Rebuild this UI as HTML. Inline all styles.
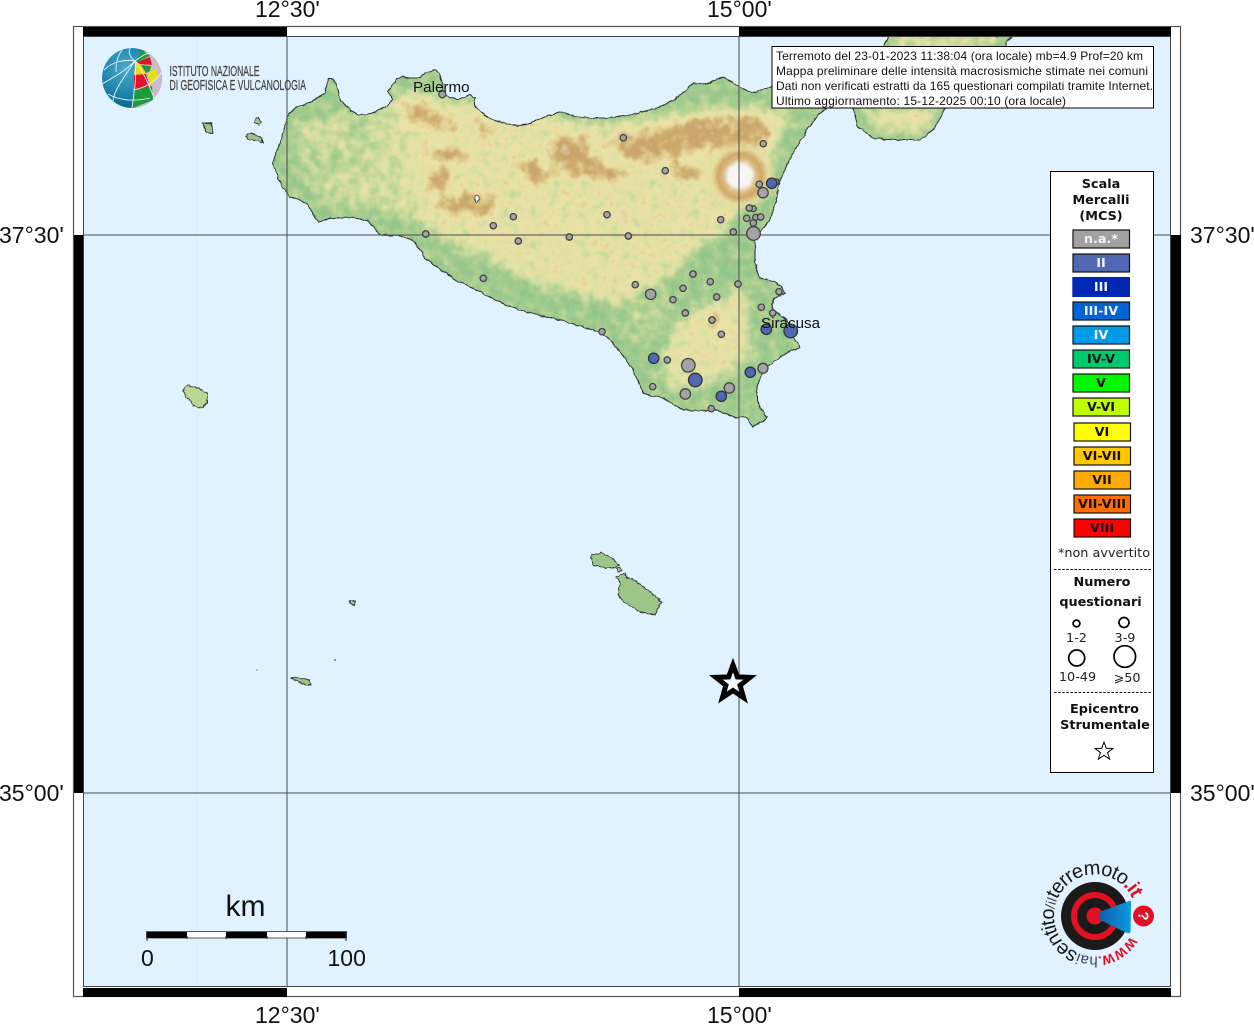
<!DOCTYPE html>
<html><head><meta charset="utf-8"><title>Mappa intensità</title>
<style>
html,body{margin:0;padding:0;background:#fff;width:1254px;height:1024px;overflow:hidden}
svg{display:block}
.ax{font-family:"Liberation Sans",sans-serif;font-size:23px;fill:#111}
.info{font-family:"Liberation Sans",sans-serif;font-size:12px;fill:#111}
.b{font-family:"DejaVu Sans",sans-serif;font-weight:bold;font-size:12.8px;fill:#111;text-anchor:middle}
.r{font-family:"DejaVu Sans",sans-serif;font-size:12.8px;fill:#222;text-anchor:middle}
.w{fill:#f2f2f2}
.sw{stroke:#111;stroke-width:1.2}
.g circle{fill:#a3a3a5;stroke:#444;stroke-width:1.3}
.u circle{fill:#4f68b2;stroke:#333;stroke-width:1.3}
.isl{fill:#9cc688;stroke:#3a3f3a;stroke-width:1}
</style></head><body>
<svg width="1254" height="1024" viewBox="0 0 1254 1024" xmlns="http://www.w3.org/2000/svg">
<defs>
<path id="coast" d="M287 117L291 112 297 107 307 104 314 100 320 96 325 93 327 84 328 79 333 79 336 84 338 92 341 100 345 105 350 110 357 114 364 115 372 113 380 109 390 104 392 100 388 91 393 85 396 79 403 77 410 78 420 78 424 74 431 71 436 70 440 75 442 82 443 88 442 93 450 97 457 99 465 98 470 95 475 98 475 105 481 112 487 117 496 121 505 123 517 126 527 124 537 120 547 116 557 113 563 112 570 115 577 117 590 118 607 118 620 116 630 115 645 111 657 108 668 103 677 98 686 90 693 83 702 84 710 83 717 79 723 77 730 81 737 85 745 90 753 93 762 90 770 87 785 78 800 78 827 108 820 113 813 122 807 130 800 142 793 153 788 163 784 172 780 180 778 189 777 197 774 208 770 220 763 229 755 237 755 250 755 263 757 271 760 278 768 280 777 283 782 288 785 293 779 296 773 300 772 305 773 310 780 315 787 320 790 328 793 337 797 342 800 347 793 350 787 353 776 360 767 367 761 376 757 387 757 400 761 409 767 418 760 423 753 427 749 422 747 417 737 418 727 414 717 410 700 411 683 410 673 404 663 398 653 396 643 393 638 381 633 370 623 356 613 343 600 332 580 326 560 320 530 313 505 305 480 292 456 280 441 270 427 260 420 250 413 240 400 236 380 235 373 227 367 220 347 217 330 219 318 222 312 212 307 203 298 199 290 197 282 187 277 175 273 163 276 153 280 143 284 130Z"/>
<path id="cal" d="M889 36L884 46 853 108 858 127 873 138 895 140 920 140 935 128 945 108 1005 46 1012 36Z"/>
<clipPath id="cc"><use href="#coast"/><use href="#cal"/></clipPath>
<filter id="terrain" filterUnits="userSpaceOnUse" x="260" y="30" width="780" height="420" color-interpolation-filters="sRGB">
<feGaussianBlur in="SourceGraphic" stdDeviation="5" result="e"/>
<feTurbulence type="fractalNoise" baseFrequency=".1" numOctaves="3" seed="3" result="n"/>
<feColorMatrix in="n" values="1 0 0 0 0 1 0 0 0 0 1 0 0 0 0 0 0 0 0 1" result="ng"/>
<feComposite in="e" in2="ng" operator="arithmetic" k1="0" k2="1" k3=".4" k4="-.2"/>
<feComponentTransfer>
<feFuncR type="table" tableValues=".565 .588 .659 .761 .875 .922 .878 .812 .784 .863 .94"/>
<feFuncG type="table" tableValues=".769 .78 .808 .847 .878 .89 .808 .682 .643 .769 .91"/>
<feFuncB type="table" tableValues=".541 .549 .565 .604 .643 .659 .565 .439 .408 .627 .85"/>
<feFuncA type="linear" slope="0" intercept="1"/>
</feComponentTransfer>
<feGaussianBlur stdDeviation=".6"/>
</filter>
<filter id="coastr" filterUnits="userSpaceOnUse" x="260" y="30" width="780" height="420" color-interpolation-filters="sRGB">
<feTurbulence type="fractalNoise" baseFrequency=".18" numOctaves="2" seed="7"/>
<feDisplacementMap in="SourceGraphic" scale="3" xChannelSelector="R" yChannelSelector="G"/>
</filter>
<filter id="islr" filterUnits="userSpaceOnUse" x="170" y="100" width="520" height="600" color-interpolation-filters="sRGB">
<feTurbulence type="fractalNoise" baseFrequency=".3" numOctaves="2" seed="5"/>
<feDisplacementMap in="SourceGraphic" scale="3" xChannelSelector="R" yChannelSelector="G"/>
</filter>
<radialGradient id="etna"><stop offset="0" stop-color="#fbf9fb"/><stop offset=".3" stop-color="#f6f2f0"/><stop offset=".44" stop-color="#dcbc84"/><stop offset=".58" stop-color="#cfa866"/><stop offset=".74" stop-color="#e7dca0" stop-opacity=".85"/><stop offset="1" stop-color="#e7dca0" stop-opacity="0"/></radialGradient>
<radialGradient id="globe" cx=".4" cy=".35" r=".75"><stop offset="0" stop-color="#4aaccb"/><stop offset=".6" stop-color="#1a82a8"/><stop offset="1" stop-color="#0b5278"/></radialGradient>
<linearGradient id="mega" x1="0" y1="0" x2="1" y2="0"><stop offset="0" stop-color="#0d5fae"/><stop offset="1" stop-color="#0b9be0"/></linearGradient>
<clipPath id="gc"><circle cx="132" cy="78" r="30"/></clipPath>
<path id="arc" d="M1130.4 936.2A41 41 0 1 1 1135.4 908.9"/>
</defs>

<!-- sea -->
<rect x="83" y="36" width="1088" height="951" fill="#e0f2ff"/>
<line x1="197" y1="36" x2="197" y2="987" stroke="#d9ecf8" stroke-width="1"/>

<!-- land -->
<g filter="url(#coastr)">
<g clip-path="url(#cc)">
<g filter="url(#terrain)">
<rect x="260" y="30" width="780" height="420" fill="#2a2a2a"/>
<!-- elevation blobs -->
<path d="M292 125L395 100 400 205 340 212 300 180Z" fill="#444"/>
<path d="M300 125L350 118 345 150 300 150Z" fill="#5c5c5c"/>
<path d="M325 175L395 160 385 200 320 200Z" fill="#585858"/>
<path d="M365 110L410 95 430 225 385 215 365 170Z" fill="#585858"/>
<path d="M395 88L480 105 600 125 720 108 790 110 770 170 720 235 700 245 670 275 620 305 540 285 470 250 425 228 405 170Z" fill="#727272"/>
<path d="M680 320L745 285 750 360 705 385 665 390 665 350Z" fill="#727272"/>
<path d="M700 240L752 240 752 280 700 282Z" fill="#262626"/>
<path d="M625 300L680 290 660 340 628 345Z" fill="#3c3c3c"/>
<path d="M860 110L940 110 925 132 880 132Z" fill="#727272"/>
<path d="M892 36L1005 36 990 46 890 46Z" fill="#727272"/>
<!-- ridges -->
<g fill="#b8b8b8">
<path d="M405 108L428 102 434 118 410 124Z"/>
<path d="M425 112L452 116 454 132 430 130Z"/>
<path d="M476 120L488 116 492 136 480 138Z"/>
<path d="M432 148L464 148 466 162 436 162Z"/>
<path d="M430 170L450 168 446 192 422 192Z"/>
<path d="M438 198L492 193 494 214 442 214Z"/>
<path d="M518 163L534 158 554 175 540 185 522 178Z"/>
<path d="M552 136L587 138 594 167 570 177 550 160Z"/>
<path d="M588 153L622 170 612 186 583 172Z"/>
<path d="M610 138L660 128 700 116 762 116 772 137 745 154 700 147 680 157 645 162 618 154Z"/>
<path d="M668 170L697 163 702 177 673 182Z"/>
<path d="M706 316L718 314 718 328 706 328Z"/>
</g>
<g fill="#f4f4f4"><ellipse cx="565" cy="150" rx="6" ry="6"/><ellipse cx="696" cy="130" rx="7" ry="4"/></g>
</g>
<circle cx="740" cy="176" r="38" fill="url(#etna)"/>
<ellipse cx="477" cy="199" rx="1.6" ry="3.4" fill="#f4fbff" stroke="#333" stroke-width=".7"/>
</g>
<use href="#coast" fill="none" stroke="#343a36" stroke-width="1.1"/>
<use href="#cal" fill="none" stroke="#343a36" stroke-width="1.1"/>
</g>

<!-- islands -->
<g class="isl" filter="url(#islr)">
<path d="M202 123L212 123 213 133 207 133Z"/>
<path d="M246 135L252 133 262 138 263 143 255 140 248 140Z"/>
<path d="M255 118L258 117 261 122 259 125 255 123Z"/>
<path d="M183 390L188 385 193 387 198 388 207 393 207 403 202 408 193 406 190 400 185 396Z" fill="#bcd694"/>
<path d="M291 678L295 677 310 680 311 685 305 685Z"/>
<path d="M591 555L602 553 612 558 619 565 615 568 605 568 593 565Z"/>
<path d="M617 568L620 567 622 571 618 572Z"/>
<path d="M616 577L625 573 627 578 632 579 637 582 650 592 662 602 658 608 655 615 640 612 625 603 618 595 620 582Z"/>
<path d="M350 601L355 601 355 605 350 604Z"/>
</g>
<circle cx="335" cy="660" r=".9" fill="#555"/><circle cx="257" cy="670" r=".7" fill="#777"/>

<!-- grid -->
<g stroke="#4c4c4c" stroke-width="1">
<line x1="287" y1="36" x2="287" y2="987"/><line x1="739" y1="36" x2="739" y2="987"/>
<line x1="83" y1="235" x2="1171" y2="235"/><line x1="83" y1="793" x2="1171" y2="793"/>
</g>

<!-- frame -->
<rect x="73.5" y="26.5" width="1107" height="970" fill="none" stroke="#555" stroke-width="1.2"/>
<rect x="83.5" y="36.5" width="1087" height="950" fill="none" stroke="#444" stroke-width="1"/>
<g fill="#000">
<rect x="83" y="27" width="204" height="9"/><rect x="739" y="27" width="432" height="9"/>
<rect x="83" y="988" width="204" height="9"/><rect x="739" y="988" width="432" height="9"/>
<rect x="74" y="235" width="9" height="558"/><rect x="1171" y="235" width="10" height="558"/>
</g>
<g class="ax">
<text x="255" y="17">12°30'</text><text x="707" y="17">15°00'</text>
<text x="255" y="1023">12°30'</text><text x="707" y="1023">15°00'</text>
<text x="-1" y="243">37°30'</text><text x="-1" y="801">35°00'</text>
<text x="1190" y="243">37°30'</text><text x="1190" y="801">35°00'</text>
</g>

<!-- stations -->
<g class="g">
<circle cx="442.3" cy="94.3" r="3.5"/><circle cx="513.3" cy="216.7" r="3.2"/><circle cx="493.3" cy="225.7" r="3.2"/><circle cx="425.7" cy="234" r="3.2"/><circle cx="518.3" cy="241" r="3.2"/><circle cx="483.3" cy="278.3" r="3.2"/>
<circle cx="623.3" cy="137.7" r="3.2"/><circle cx="665.3" cy="170.7" r="3.2"/><circle cx="763.3" cy="143.7" r="3.2"/><circle cx="759.3" cy="184.3" r="3.2"/><circle cx="776" cy="182" r="3"/><circle cx="763" cy="192.7" r="5.2"/>
<circle cx="753.3" cy="208.7" r="3"/><circle cx="749.3" cy="208" r="3.2"/><circle cx="720.7" cy="219.7" r="3.2"/><circle cx="746.7" cy="218.3" r="3.2"/><circle cx="755.7" cy="217.3" r="3"/><circle cx="760.7" cy="217" r="3.2"/><circle cx="753.3" cy="223" r="3.2"/><circle cx="607" cy="214.7" r="3.2"/><circle cx="733.3" cy="232" r="3.2"/><circle cx="569.3" cy="237" r="3.2"/><circle cx="628.3" cy="236" r="3.2"/><circle cx="753.5" cy="233.5" r="6.8"/>
<circle cx="693" cy="274" r="3.2"/><circle cx="710.3" cy="281.7" r="3.2"/><circle cx="635.3" cy="284.7" r="3.2"/><circle cx="738" cy="284" r="3.2"/><circle cx="683" cy="288.3" r="3.2"/><circle cx="650.7" cy="294.3" r="5.2"/><circle cx="716.7" cy="297" r="3.2"/><circle cx="673" cy="299.7" r="3.2"/><circle cx="779" cy="291.7" r="3.2"/><circle cx="761.3" cy="307.3" r="3.2"/><circle cx="772.7" cy="313" r="3.2"/><circle cx="685.3" cy="313" r="3.2"/><circle cx="712" cy="320" r="3.2"/><circle cx="721.3" cy="334.3" r="3.2"/><circle cx="602" cy="331.7" r="3.2"/><circle cx="667.3" cy="360" r="3.2"/><circle cx="688.3" cy="365.3" r="6.8"/><circle cx="763" cy="368.3" r="5"/><circle cx="729.3" cy="388" r="5.2"/><circle cx="652.7" cy="386.7" r="3.2"/><circle cx="685.3" cy="394" r="5.2"/><circle cx="711.3" cy="408.7" r="3.2"/>
</g>
<g class="u">
<circle cx="771.7" cy="183.3" r="5.2"/><circle cx="766.3" cy="329.3" r="5.2"/><circle cx="790.7" cy="331" r="6.8"/><circle cx="653.7" cy="358.3" r="5.2"/><circle cx="750.3" cy="372.3" r="5.2"/><circle cx="695.3" cy="380" r="6.8"/><circle cx="721.3" cy="396.3" r="5.2"/>
</g>
<g font-family="'Liberation Sans',sans-serif" font-size="15.2" fill="#111">
<text x="413" y="92">Palermo</text><text x="761" y="328">Siracusa</text>
</g>

<!-- epicentre star -->
<path d="M733 665L737.4 676.9 750.1 677.4 740.1 685.3 743.6 697.6 733 690.5 722.4 697.6 725.9 685.3 715.9 677.4 728.6 676.9Z" fill="#f1f8fd" stroke="#000" stroke-width="5" stroke-miterlimit="8"/>

<!-- info box -->
<rect x="772" y="46.5" width="381.5" height="61.5" fill="#fff" stroke="#000" stroke-width="1"/>
<g class="info">
<text x="776" y="60" textLength="367">Terremoto del 23-01-2023 11:38:04 (ora locale) mb=4.9 Prof=20 km</text>
<text x="776" y="75" textLength="372">Mappa preliminare delle intensità macrosismiche stimate nei comuni</text>
<text x="776" y="90" textLength="377">Dati non verificati estratti da 165 questionari compilati tramite Internet.</text>
<text x="776" y="105" textLength="290">Ultimo aggiornamento: 15-12-2025 00:10 (ora locale)</text>
</g>

<!-- INGV logo -->
<g clip-path="url(#gc)">
<circle cx="132" cy="78" r="30" fill="url(#globe)"/>
<path d="M136 61L146 50 165 60 165 110 133 110 134 90 134 72Z" fill="#c9bcca"/>
<path d="M136 61L142 50 150 56 137 62Z" fill="#1d9a3a"/>
<path d="M137 62L150 57 152 65 140 64Z" fill="#e3132c"/>
<path d="M135 63L142 65 146 75 135 75Z" fill="#e8df10"/>
<path d="M141 65L151 66 150 71 146 73Z" fill="#1d9a3a"/>
<path d="M134 75L146 74 150 88 134 90Z" fill="#e3132c"/>
<path d="M147 74L156 68 158 78 151 85Z" fill="#e8df10"/>
<path d="M133 90L152 86 153 100 133 108Z" fill="#1d9a3a"/>
<g fill="none" stroke="#e8f4f8" stroke-width=".9">
<path d="M135 61C137 78 134 92 132 108"/>
<path d="M135 61C124 59 112 62 104 70"/>
<path d="M135 61C124 72 112 78 102 84"/>
<path d="M135 61C122 80 113 92 113 102"/>
<path d="M122 50C116 58 116 66 116 72"/>
<path d="M135 61C130 58 128 52 130 48"/>
<path d="M135 61C143 55 148 52 152 54"/>
<path d="M135 61C144 72 150 88 155 100"/>
<path d="M133 90C145 88 155 82 162 72"/>
<path d="M108 94C118 100 134 102 150 98"/>
</g>
</g>
<g font-family="'Liberation Sans Narrow','Liberation Sans',sans-serif" font-size="14.5" fill="#444" stroke="#444" stroke-width=".25">
<text x="169.5" y="76" textLength="90" lengthAdjust="spacingAndGlyphs">ISTITUTO NAZIONALE</text>
<text x="169.5" y="90" textLength="136.5" lengthAdjust="spacingAndGlyphs">DI GEOFISICA E VULCANOLOGIA</text>
</g>

<!-- legend -->
<rect x="1050.5" y="171.5" width="103" height="601" fill="#fff" stroke="#000" stroke-width="1"/>
<text class="b" x="1101" y="188">Scala</text><text class="b" x="1101" y="204">Mercalli</text><text class="b" x="1101" y="220">(MCS)</text>
<g class="sw">
<rect x="1073" y="230" width="56.5" height="18" fill="#a1a1a1"/>
<rect x="1073" y="254" width="56.5" height="18" fill="#5068b0"/>
<rect x="1072.3" y="277" width="57.7" height="20" fill="#0028b4" stroke="none"/>
<rect x="1073" y="302" width="56.5" height="18" fill="#0064d2"/>
<rect x="1073" y="326" width="56.5" height="18" fill="#009be6"/>
<rect x="1073" y="350" width="56.5" height="18" fill="#00c86e"/>
<rect x="1073" y="374" width="56.5" height="18" fill="#00f800"/>
<rect x="1073" y="398" width="56.5" height="18" fill="#bfff00"/>
<rect x="1074" y="423" width="56.5" height="18" fill="#ffff00"/>
<rect x="1074" y="447" width="56.5" height="18" fill="#ffc800"/>
<rect x="1074" y="471" width="56.5" height="18" fill="#ffaa00"/>
<rect x="1074" y="495" width="56.5" height="18" fill="#ff6e00"/>
<rect x="1074" y="519" width="56.5" height="18" fill="#ff0000"/>
</g>
<text class="b w" x="1101" y="243">n.a.*</text><text class="b w" x="1101" y="267">II</text><text class="b w" x="1101" y="291">III</text><text class="b w" x="1101" y="315">III-IV</text><text class="b w" x="1101" y="339">IV</text>
<text class="b" x="1101" y="363">IV-V</text><text class="b" x="1101" y="387">V</text><text class="b" x="1101" y="411">V-VI</text><text class="b" x="1102" y="436">VI</text><text class="b" x="1102" y="460">VI-VII</text><text class="b" x="1102" y="484">VII</text><text class="b" x="1102" y="508">VII-VIII</text><text class="b" x="1102" y="532">VIII</text>
<text class="r" x="1104" y="557">*non avvertito</text>
<line x1="1054" y1="569.5" x2="1152" y2="569.5" stroke="#111" stroke-width="1" stroke-dasharray="2.5 1.6"/>
<text class="b" x="1102" y="586">Numero</text><text class="b" x="1100.5" y="606">questionari</text>
<g fill="none" stroke="#000" stroke-width="1.7">
<circle cx="1076.5" cy="623.5" r="3.4"/><circle cx="1124" cy="622.5" r="5"/><circle cx="1076.7" cy="658" r="8"/><circle cx="1124.8" cy="656.5" r="10.8"/>
</g>
<text class="r" x="1076.5" y="642">1-2</text><text class="r" x="1125" y="642">3-9</text><text class="r" x="1077.5" y="681">10-49</text><text class="r" x="1127" y="682">⩾50</text>
<line x1="1054" y1="692.5" x2="1151" y2="692.5" stroke="#111" stroke-width="1" stroke-dasharray="2.5 1.6"/>
<text class="b" x="1104.5" y="713">Epicentro</text><text class="b" x="1105" y="729">Strumentale</text>
<path d="M1104 742L1106.2 748.3 1113 748.5 1107.6 752.6 1109.6 759 1104 755.3 1098.4 759 1100.4 752.6 1095 748.5 1101.8 748.3Z" fill="#fff" stroke="#000" stroke-width="1"/>

<!-- scale -->
<g font-family="'Liberation Sans',sans-serif" fill="#111">
<text x="225.5" y="916" font-size="30">km</text>
<text x="141" y="966" font-size="23">0</text><text x="327.5" y="966" font-size="23">100</text>
</g>
<rect x="146.5" y="931.5" width="200" height="6.5" fill="#fff" stroke="#333" stroke-width=".8"/>
<g fill="#000"><rect x="147" y="932" width="40" height="6"/><rect x="226" y="932" width="41" height="6"/><rect x="306" y="932" width="40" height="6"/></g>
<g stroke="#222" stroke-width="1"><path d="M147 932V941M187 936V939M226 936V939M267 936V939M306 936V939M346 932V941"/></g>

<!-- hai sentito logo -->
<circle cx="1095" cy="916" r="34" fill="#1a1a1a"/>
<circle cx="1095" cy="916" r="21" fill="none" stroke="#e30f23" stroke-width="6"/>
<circle cx="1095" cy="916" r="8.5" fill="#e30f23"/>
<path d="M1100 911.7L1129 901Q1131 900.5 1131 902.5L1130.5 931.5Q1130 934 1127 933L1100 920Z" fill="url(#mega)"/>
<circle cx="1143.5" cy="916" r="10.5" fill="#e30f23"/>
<text x="1143.5" y="921" transform="rotate(90 1143.5 916)" font-family="'Liberation Sans',sans-serif" font-size="15" font-weight="bold" fill="#fff" text-anchor="middle">?</text>
<text font-family="'Liberation Sans',sans-serif" font-size="20" fill="#1a1a1a">
<textPath href="#arc" startOffset="0"><tspan fill="#e30f23" font-weight="bold" font-size="13">WWW.</tspan><tspan font-size="15" fill="#444">hai</tspan><tspan letter-spacing="-.8">sentito</tspan><tspan font-size="14" fill="#444">/il</tspan><tspan letter-spacing="-.8">terremoto</tspan><tspan fill="#e30f23" font-weight="bold" letter-spacing="-.8">.it</tspan></textPath>
</text>
</svg>
</body></html>
